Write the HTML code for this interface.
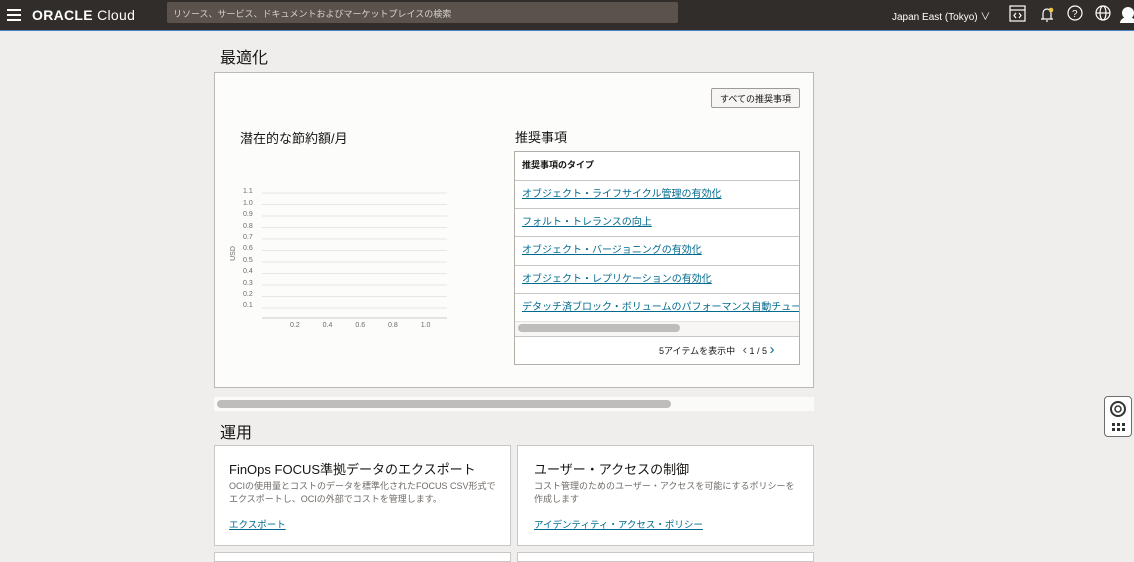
<!DOCTYPE html>
<html><head><meta charset="utf-8"><style>
*{margin:0;padding:0;box-sizing:border-box}
body{width:1134px;height:555px;overflow:hidden;background:#f0eeec;font-family:"Liberation Sans","Noto Sans CJK JP",sans-serif;position:relative;color:#161513}
.a{position:absolute}
.hdr{left:0;top:0;width:1134px;height:31px;background:#312d2a;border-bottom:1px solid #4a7fc1}
.lnk{color:#006b8f;text-decoration:underline;font-size:10px}
.row{position:absolute;left:0;width:285px;border-top:1px solid #c9c5c1;height:28px;padding:4px 7px;white-space:nowrap;overflow:hidden;line-height:16px}
.yl{position:absolute;left:243px;font-size:7px;color:#6f6b67}
.card{position:absolute;background:#fff;border:1px solid #cbc7c3}
</style></head><body>
<div class="a hdr"></div>
<div class="a" style="left:7px;top:9px;width:14px;height:2px;background:#fff;box-shadow:0 5px 0 #fff,0 10px 0 #fff"></div>
<div class="a" style="left:32px;top:7px;color:#fff;font-size:14px;font-weight:bold;letter-spacing:0.3px">ORACLE <span style="font-weight:normal">Cloud</span></div>
<div class="a" style="left:167px;top:2px;width:511px;height:21px;background:#5b524d;border-radius:2px;color:#d8d3cf;font-size:9px;padding:5px 6px">リソース、サービス、ドキュメントおよびマーケットプレイスの検索</div>
<div class="a" style="left:892px;top:8px;color:#fff;font-size:10px">Japan East (Tokyo) ∨</div>
<svg class="a" style="left:1008px;top:5px" width="126" height="18" fill="none" stroke="#fff" stroke-width="1.2">
<rect x="2" y="1" width="15" height="15"/><line x1="2" y1="5" x2="17" y2="5"/><path d="M8 8l-2 2.5 2 2.5M11 8l2 2.5-2 2.5"/>
<path d="M33 14h12M35 14v-6a4 4 0 0 1 8 0v6M38 16h2"/><circle cx="43" cy="5" r="2.3" fill="#f0c74a" stroke="none"/>
<circle cx="67" cy="8" r="7"/><text x="64" y="12" fill="#fff" stroke="none" font-size="10">?</text>
<circle cx="95" cy="8" r="7"/><ellipse cx="95" cy="8" rx="3" ry="7"/><line x1="88" y1="8" x2="102" y2="8"/>
<circle cx="120" cy="8" r="6" fill="#fff" stroke="none"/><path d="M112 18a8 6 0 0 1 16 0" fill="#fff" stroke="none"/>
</svg>
<div class="a" style="left:220px;top:49px;font-size:16px;line-height:24px;top:47px">最適化</div>
<div class="a" style="left:214px;top:72px;width:600px;height:316px;background:#fcfcfb;border:1px solid #bdb8b4"></div>
<div class="a" style="left:711px;top:88px;width:89px;height:20px;background:#f6f5f4;border:1px solid #9e9a96;border-radius:2px;font-size:9px;text-align:center;padding-top:3px">すべての推奨事項</div>
<div class="a" style="left:240px;top:128px;font-size:13px">潜在的な節約額/月</div>
<svg class="a" style="left:262px;top:186px" width="186" height="134">
<g stroke="#e8e6e4" stroke-width="1">
<line x1="0" y1="7" x2="185" y2="7"/><line x1="0" y1="18.5" x2="185" y2="18.5"/><line x1="0" y1="30" x2="185" y2="30"/><line x1="0" y1="41.5" x2="185" y2="41.5"/><line x1="0" y1="53" x2="185" y2="53"/><line x1="0" y1="64.5" x2="185" y2="64.5"/><line x1="0" y1="76" x2="185" y2="76"/><line x1="0" y1="87.5" x2="185" y2="87.5"/><line x1="0" y1="99" x2="185" y2="99"/><line x1="0" y1="110.5" x2="185" y2="110.5"/><line x1="0" y1="122" x2="185" y2="122"/>
</g>
<line x1="0" y1="132" x2="185" y2="132" stroke="#cfccc9"/>
</svg>
<div class="yl" style="top:188px">1.1</div><div class="yl" style="top:200px">1.0</div><div class="yl" style="top:211px">0.9</div><div class="yl" style="top:223px">0.8</div><div class="yl" style="top:234px">0.7</div><div class="yl" style="top:245px">0.6</div><div class="yl" style="top:257px">0.5</div><div class="yl" style="top:268px">0.4</div><div class="yl" style="top:280px">0.3</div><div class="yl" style="top:291px">0.2</div><div class="yl" style="top:302px">0.1</div>
<div class="a" style="left:226px;top:250px;font-size:7px;color:#6f6b67;transform:rotate(-90deg)">USD</div>
<div class="a" style="left:290px;top:322px;font-size:7px;color:#6f6b67;word-spacing:21px">0.2 0.4 0.6 0.8 1.0</div>
<div class="a" style="left:515px;top:127px;font-size:13px">推奨事項</div>
<div class="a" style="left:514px;top:151px;width:286px;height:214px;background:#fff;border:1px solid #b3aeaa;overflow:hidden">
<div class="row" style="top:-1px;border-top:none;font-size:9px;font-weight:bold;padding-top:6px">推奨事項のタイプ</div>
<div class="row" style="top:28px"><span class="lnk">オブジェクト・ライフサイクル管理の有効化</span></div>
<div class="row" style="top:56px"><span class="lnk">フォルト・トレランスの向上</span></div>
<div class="row" style="top:84px"><span class="lnk">オブジェクト・バージョニングの有効化</span></div>
<div class="row" style="top:113px"><span class="lnk">オブジェクト・レプリケーションの有効化</span></div>
<div class="row" style="top:141px"><span class="lnk">デタッチ済ブロック・ボリュームのパフォーマンス自動チューニング</span></div>
<div class="a" style="left:0;top:169px;width:286px;height:15px;background:#f7f6f5;border-top:1px solid #e5e2df"></div>
<div class="a" style="left:3px;top:172px;width:162px;height:8px;background:#bfbdbb;border-radius:4px"></div>
<div class="a" style="left:0;top:184px;width:286px;border-top:1px solid #c9c5c1"></div>
<div class="a" style="left:144px;top:190px;font-size:9px;line-height:16px">5アイテムを表示中 &nbsp;&nbsp;<span style="font-size:13px;color:#555">‹</span> 1 / 5 <span style="font-size:15px;color:#006b8f">›</span></div>
</div>
<div class="a" style="left:214px;top:397px;width:600px;height:14px;background:#fafaf9"></div>
<div class="a" style="left:217px;top:400px;width:454px;height:8px;background:#bfbdbb;border-radius:4px"></div>
<div class="a" style="left:220px;top:422px;font-size:16px;line-height:24px">運用</div>
<div class="card" style="left:214px;top:445px;width:297px;height:101px">
<div class="a" style="left:14px;top:13px;font-size:13px">FinOps FOCUS準拠データのエクスポート</div>
<div class="a" style="left:14px;top:34px;font-size:9px;color:#6f6b67;line-height:13px;width:272px">OCIの使用量とコストのデータを標準化されたFOCUS CSV形式でエクスポートし、OCIの外部でコストを管理します。</div>
<div class="a lnk" style="left:14px;top:71px;font-size:9.5px">エクスポート</div>
</div>
<div class="card" style="left:517px;top:445px;width:297px;height:101px">
<div class="a" style="left:16px;top:13px;font-size:13px">ユーザー・アクセスの制御</div>
<div class="a" style="left:16px;top:34px;font-size:9px;color:#6f6b67;line-height:13px;width:264px">コスト管理のためのユーザー・アクセスを可能にするポリシーを作成します</div>
<div class="a lnk" style="left:16px;top:71px;font-size:9.5px">アイデンティティ・アクセス・ポリシー</div>
</div>
<div class="card" style="left:214px;top:552px;width:297px;height:10px"></div>
<div class="card" style="left:517px;top:552px;width:297px;height:10px"></div>
<div class="a" style="left:1104px;top:396px;width:28px;height:41px;background:#fff;border:1px solid #6f6b67;border-radius:4px"></div>
<svg class="a" style="left:1108px;top:400px" width="20" height="34" fill="none" stroke="#333" stroke-width="2"><circle cx="10" cy="9" r="7"/><circle cx="10" cy="9" r="3" stroke-width="1.5"/>
<g fill="#333" stroke="none"><rect x="4" y="23" width="3" height="3"/><rect x="9" y="23" width="3" height="3"/><rect x="14" y="23" width="3" height="3"/><rect x="4" y="28" width="3" height="3"/><rect x="9" y="28" width="3" height="3"/><rect x="14" y="28" width="3" height="3"/></g></svg>
</body></html>
